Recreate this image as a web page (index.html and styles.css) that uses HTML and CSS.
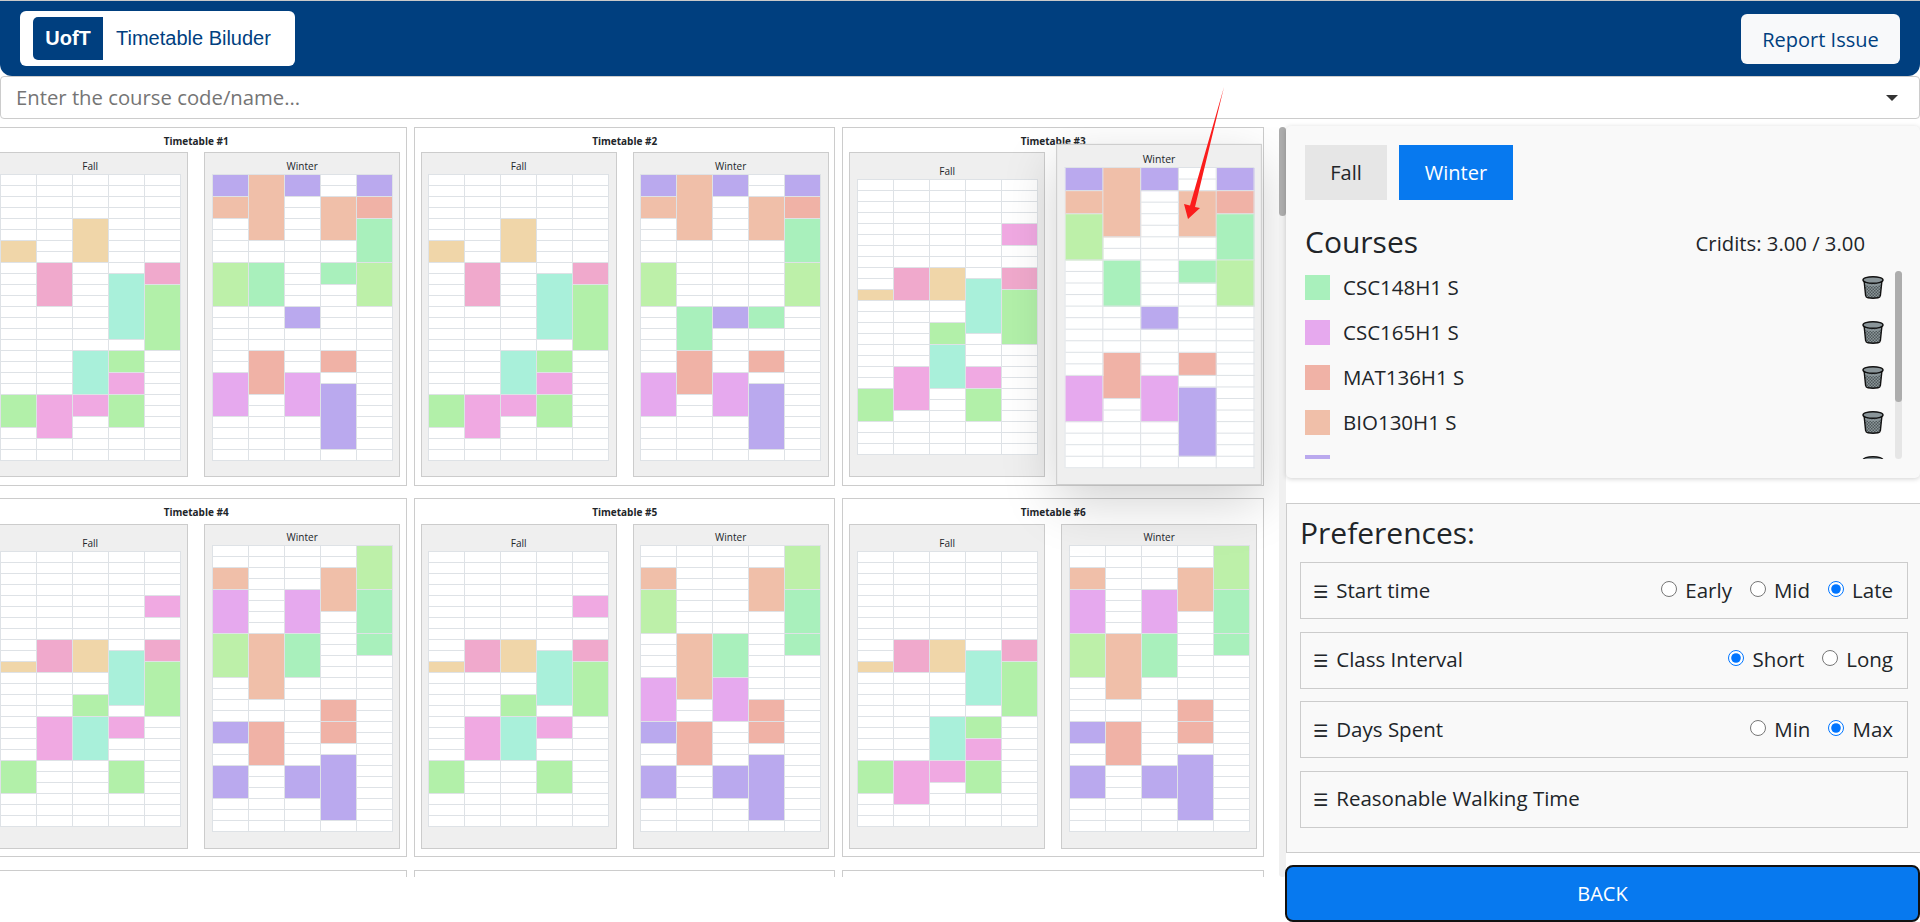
FILE: index.html
```html
<!DOCTYPE html>
<html lang="en">
<head>
    <meta charset="UTF-8">
    <meta name="viewport" content="width=device-width, initial-scale=1.0">
    <title>UofT Timetable Biluder</title>
    <link rel="stylesheet" href="styles.css">
</head>
<body>
    <header class="topbar">
        <div class="brand">
            <span class="brand-mark">UofT</span>
            <span class="brand-name">Timetable Biluder</span>
        </div>
        <button class="report-btn">Report Issue</button>
    </header>

    <div class="course-search">
        <input type="text" placeholder="Enter the course code/name...">
        <span class="caret"></span>
    </div>

    <main class="content">
        <div class="results-wrap">
            <section class="results">
                <div class="results-grid" id="results-grid"></div>
            </section>
            <div class="scrollbar">
                <div class="scrollbar-thumb results-thumb"></div>
            </div>
        </div>

        <aside class="sidebar">
            <div class="courses-panel">
                <div class="term-tabs">
                    <button class="term-tab">Fall</button>
                    <button class="term-tab active">Winter</button>
                </div>
                <div class="courses-head">
                    <h3>Courses</h3>
                    <span class="credits">Cridits: 3.00 / 3.00</span>
                </div>
                <div class="course-box">
                    <ul class="course-list" id="course-list"></ul>
                    <div class="scrollbar list-scrollbar">
                        <div class="scrollbar-thumb list-thumb"></div>
                    </div>
                </div>
            </div>

            <div class="prefs-panel">
                <h3>Preferences:</h3>
                <div class="pref-row">
                    <span class="pref-name"><span class="grip">☰</span>Start time</span>
                    <div class="pref-options">
                        <label><input type="radio" name="start">Early</label>
                        <label><input type="radio" name="start">Mid</label>
                        <label><input type="radio" name="start" checked>Late</label>
                    </div>
                </div>
                <div class="pref-row">
                    <span class="pref-name"><span class="grip">☰</span>Class Interval</span>
                    <div class="pref-options">
                        <label><input type="radio" name="interval" checked>Short</label>
                        <label><input type="radio" name="interval">Long</label>
                    </div>
                </div>
                <div class="pref-row">
                    <span class="pref-name"><span class="grip">☰</span>Days Spent</span>
                    <div class="pref-options">
                        <label><input type="radio" name="days">Min</label>
                        <label><input type="radio" name="days" checked>Max</label>
                    </div>
                </div>
                <div class="pref-row">
                    <span class="pref-name"><span class="grip">☰</span>Reasonable Walking Time</span>
                </div>
            </div>

            <button class="back-btn">BACK</button>
        </aside>
    </main>

    <!-- red arrow somebody drew on top of the screenshot -->
    <svg class="annotation" width="50" height="140" viewBox="1180 85 50 140">
        <polygon points="1224,87 1195,207 1200,208 1188,219 1184,204 1190,205.5" fill="#fb1c1c"/>
    </svg>

    <script src="app.js"></script>
</body>
</html>
```

FILE: styles.css
```css
* {
    box-sizing: border-box;
}

body {
    font-family: "Open Sans", "Noto Sans", Arial, sans-serif;
    margin: 0;
    height: 100vh;
    overflow: hidden;
    display: flex;
    flex-direction: column;
    background-color: #fff;
    color: #212529;
}

h3 {
    margin: 0;
    font-weight: 400;
}

/* top bar */
.topbar {
    height: 76px;
    flex: none;
    display: flex;
    align-items: center;
    justify-content: space-between;
    padding: 0 20px;
    background-color: #003f7f;
    border-top: 1px solid #c9c9c9;
    border-radius: 0 0 12px 12px;
}

.brand {
    width: 275px;
    height: 55px;
    display: flex;
    align-items: center;
    padding-left: 13px;
    background: #fff;
    border-radius: 6px;
    font-family: "Liberation Sans", Arial, sans-serif;
}

.brand-mark {
    width: 70px;
    height: 43px;
    line-height: 43px;
    text-align: center;
    font-size: 20px;
    font-weight: 700;
    color: #fff;
    background: #003f7f;
    border-radius: 5px 0 0 5px;
}

.brand-name {
    margin-left: 13px;
    font-size: 20px;
    color: #003f7f;
}

.report-btn {
    width: 159px;
    height: 50px;
    margin-top: 1px;
    font: inherit;
    font-size: 20px;
    color: #003f7f;
    background: #f8f9fa;
    border: none;
    border-radius: 6px;
}

/* course search */
.course-search {
    height: 43px;
    flex: none;
    display: flex;
    align-items: center;
    padding: 0 21px 0 13px;
    border: 1px solid #ccc;
    border-radius: 4px;
}

.course-search input {
    flex: 1;
    border: none;
    outline: none;
    padding: 0 2px 2px;
    background: transparent;
    font: inherit;
    font-size: 20.3px;
    color: #333;
}

.course-search input::placeholder {
    color: #757575;
}

.caret {
    width: 0;
    height: 0;
    margin-top: 1px;
    border-left: 6px solid transparent;
    border-right: 6px solid transparent;
    border-top: 6px solid #333;
}

/* main area */
.content {
    flex: 1;
    display: flex;
    min-height: 0;
}

.results-wrap {
    width: 1286px;
    height: 750px;
    flex: none;
    margin-top: 8px;
    display: flex;
}

.results {
    flex: 1;
    min-width: 0;
    overflow: hidden;
}

.scrollbar {
    width: 7px;
    flex: none;
    background: #f0f0f0;
    border-radius: 4px;
}

.scrollbar-thumb {
    background: #acacac;
    border-radius: 4px;
}

.results-thumb {
    height: 89px;
}

.results-grid {
    display: grid;
    grid-template-columns: repeat(3, 421.5px);
    grid-auto-rows: 359px;
    column-gap: 7px;
    row-gap: 12.3px;
    margin-left: -14.6px;
}

.timetable {
    border: 1px solid #ccc;
    background: #fff;
}

.timetable-title {
    height: 24.4px;
    line-height: 26px;
    text-align: center;
    font-size: 10px;
    font-weight: 700;
}

.terms {
    display: flex;
    justify-content: center;
    gap: 16px;
}

.term {
    width: 196px;
    height: 325px;
    display: flex;
    flex-direction: column;
    align-items: center;
    justify-content: center;
    padding-bottom: 9px;
    background: #efefef;
    border: 1px solid #ccc;
}

.term.enlarged {
    position: relative;
    z-index: 5;
    transform: scale(1.05);
    box-shadow: 0 16px 48px rgba(0, 0, 0, 0.175);
}

.term-label {
    height: 14px;
    line-height: 12px;
    font-size: 10px;
}

.week {
    display: grid;
    grid-template-columns: repeat(5, 36px);
    grid-auto-rows: 11px;
    border-left: 1px solid #dee2e6;
    border-top: 1px solid #dee2e6;
    background: #fff;
}

.slot {
    border-right: 1px solid #dee2e6;
    border-bottom: 1px solid #dee2e6;
}

.mint { background: #a9f0bc; }
.orchid { background: #e6a9ee; }
.salmon { background: #f0b2a6; }
.peach { background: #f0bfa9; }
.violet { background: #baa9ee; }
.lime { background: #bdf0a9; }
.tan { background: #f0d6a9; }
.pink { background: #f0a9cc; }
.teal { background: #a9f0da; }
.green { background: #b2f0a9; }
.magenta { background: #f0a9e2; }

/* sidebar */
.sidebar {
    flex: 1;
    min-width: 0;
    display: flex;
    flex-direction: column;
}

.courses-panel {
    height: 352px;
    margin-top: 7px;
    padding: 19px 18px 19px 19px;
    background: #f9f9f9;
    border-radius: 5px;
    box-shadow: 0 1px 5px rgba(0, 0, 0, 0.18);
}

.term-tabs {
    display: flex;
    gap: 12px;
}

.term-tab {
    height: 55px;
    width: 82px;
    font: inherit;
    font-size: 20px;
    color: #212529;
    background: #e6e6e6;
    border: none;
}

.term-tab.active {
    width: 114px;
    color: #fff;
    background: #0779ef;
}

.courses-head {
    height: 71px;
    padding: 15px 37px 0 0;
    display: flex;
    align-items: center;
    justify-content: space-between;
}

.courses-head h3 {
    margin-bottom: 4px;
    font-size: 30px;
}

.credits {
    font-size: 20.3px;
}

.course-box {
    height: 188px;
    display: flex;
}

.course-list {
    flex: 1;
    min-width: 0;
    margin: 0;
    padding: 4px 0 0;
    list-style: none;
    overflow: hidden;
}

.list-scrollbar {
    background: #e6e6e6;
}

.list-thumb {
    height: 131px;
    background: #adadad;
}

.course {
    height: 45px;
    display: flex;
    align-items: flex-start;
    padding-right: 11px;
    font-size: 20.5px;
}

.swatch {
    width: 25px;
    height: 25px;
    flex: none;
    margin-right: 13px;
}

.course-name {
    flex: 1;
    line-height: 24px;
}

.trash {
    flex: none;
}

.prefs-panel {
    height: 350px;
    margin-top: 25px;
    padding: 0 12px 0 13px;
    background: #f9f9f9;
    border: 1px solid #ccc;
    border-right: none;
}

.prefs-panel h3 {
    height: 58px;
    line-height: 58px;
    font-size: 30px;
}

.pref-row {
    height: 57px;
    display: flex;
    align-items: center;
    justify-content: space-between;
    margin-bottom: 12.5px;
    padding: 0 14px 2px 12px;
    border: 1px solid #ccc;
    font-size: 20.5px;
}

.grip {
    margin-right: 8px;
    font-family: "DejaVu Sans", sans-serif;
    font-size: 17px;
}

.pref-options {
    display: flex;
    gap: 18px;
}

.pref-options label {
    display: flex;
    align-items: center;
}

.pref-options input {
    width: 16px;
    height: 16px;
    margin: 0 8px 2px 0;
}

.back-btn {
    height: 57px;
    margin-top: 12px;
    margin-left: -1px;
    font: inherit;
    font-size: 20px;
    color: #fff;
    background: #0779ef;
    border: 2px solid #111;
    border-radius: 8px;
}

.annotation {
    position: absolute;
    left: 1180px;
    top: 85px;
    z-index: 10;
    pointer-events: none;
}
```

FILE: app.js
```javascript
// [day, first half hour, length, colour]
const fallA = [
    [0, 6, 2, 'tan'], [0, 20, 3, 'green'],
    [1, 8, 4, 'pink'], [1, 20, 4, 'magenta'],
    [2, 4, 4, 'tan'], [2, 16, 4, 'teal'], [2, 20, 2, 'magenta'],
    [3, 9, 6, 'teal'], [3, 16, 2, 'green'], [3, 18, 2, 'magenta'], [3, 20, 3, 'green'],
    [4, 8, 2, 'pink'], [4, 10, 6, 'green']
];
const fallB = [
    [0, 10, 1, 'tan'], [0, 19, 3, 'green'],
    [1, 8, 3, 'pink'], [1, 17, 4, 'magenta'],
    [2, 8, 3, 'tan'], [2, 13, 2, 'green'], [2, 15, 4, 'teal'],
    [3, 9, 5, 'teal'], [3, 17, 2, 'magenta'], [3, 19, 3, 'green'],
    [4, 4, 2, 'magenta'], [4, 8, 2, 'pink'], [4, 10, 5, 'green']
];
const fallC = [
    [0, 10, 1, 'tan'], [0, 19, 3, 'green'],
    [1, 8, 3, 'pink'], [1, 15, 4, 'magenta'],
    [2, 8, 3, 'tan'], [2, 13, 2, 'green'], [2, 15, 4, 'teal'],
    [3, 9, 5, 'teal'], [3, 15, 2, 'magenta'], [3, 19, 3, 'green'],
    [4, 4, 2, 'magenta'], [4, 8, 2, 'pink'], [4, 10, 5, 'green']
];
const fallD = [
    [0, 10, 1, 'tan'], [0, 19, 3, 'green'],
    [1, 8, 3, 'pink'], [1, 19, 4, 'magenta'],
    [2, 8, 3, 'tan'], [2, 15, 4, 'teal'], [2, 19, 2, 'magenta'],
    [3, 9, 5, 'teal'], [3, 15, 2, 'green'], [3, 17, 2, 'magenta'], [3, 19, 3, 'green'],
    [4, 8, 2, 'pink'], [4, 10, 5, 'green']
];

const winterA = [
    [0, 0, 2, 'violet'], [0, 2, 2, 'peach'], [0, 8, 4, 'lime'], [0, 18, 4, 'orchid'],
    [1, 0, 6, 'peach'], [1, 8, 4, 'mint'], [1, 16, 4, 'salmon'],
    [2, 0, 2, 'violet'], [2, 12, 2, 'violet'], [2, 18, 4, 'orchid'],
    [3, 2, 4, 'peach'], [3, 8, 2, 'mint'], [3, 16, 2, 'salmon'], [3, 19, 6, 'violet'],
    [4, 0, 2, 'violet'], [4, 2, 2, 'salmon'], [4, 4, 4, 'mint'], [4, 8, 4, 'lime']
];
const winterB = [
    [0, 0, 2, 'violet'], [0, 2, 2, 'peach'], [0, 8, 4, 'lime'], [0, 18, 4, 'orchid'],
    [1, 0, 6, 'peach'], [1, 12, 4, 'mint'], [1, 16, 4, 'salmon'],
    [2, 0, 2, 'violet'], [2, 12, 2, 'violet'], [2, 18, 4, 'orchid'],
    [3, 2, 4, 'peach'], [3, 12, 2, 'mint'], [3, 16, 2, 'salmon'], [3, 19, 6, 'violet'],
    [4, 0, 2, 'violet'], [4, 2, 2, 'salmon'], [4, 4, 4, 'mint'], [4, 8, 4, 'lime']
];
const winterC = [
    [0, 0, 2, 'violet'], [0, 2, 2, 'peach'], [0, 4, 4, 'lime'], [0, 18, 4, 'orchid'],
    [1, 0, 6, 'peach'], [1, 8, 4, 'mint'], [1, 16, 4, 'salmon'],
    [2, 0, 2, 'violet'], [2, 12, 2, 'violet'], [2, 18, 4, 'orchid'],
    [3, 2, 4, 'peach'], [3, 8, 2, 'mint'], [3, 16, 2, 'salmon'], [3, 19, 6, 'violet'],
    [4, 0, 2, 'violet'], [4, 2, 2, 'salmon'], [4, 4, 4, 'mint'], [4, 8, 4, 'lime']
];
const winterD = [
    [0, 2, 2, 'peach'], [0, 4, 4, 'orchid'], [0, 8, 4, 'lime'], [0, 16, 2, 'violet'], [0, 20, 3, 'violet'],
    [1, 8, 6, 'peach'], [1, 16, 4, 'salmon'],
    [2, 4, 4, 'orchid'], [2, 8, 4, 'mint'], [2, 20, 3, 'violet'],
    [3, 2, 4, 'peach'], [3, 14, 2, 'salmon'], [3, 16, 2, 'salmon'], [3, 19, 6, 'violet'],
    [4, 0, 4, 'lime'], [4, 4, 4, 'mint'], [4, 8, 2, 'mint']
];
const winterE = [
    [0, 2, 2, 'peach'], [0, 4, 4, 'lime'], [0, 12, 4, 'orchid'], [0, 16, 2, 'violet'], [0, 20, 3, 'violet'],
    [1, 8, 6, 'peach'], [1, 16, 4, 'salmon'],
    [2, 8, 4, 'mint'], [2, 12, 4, 'orchid'], [2, 20, 3, 'violet'],
    [3, 2, 4, 'peach'], [3, 14, 2, 'salmon'], [3, 16, 2, 'salmon'], [3, 19, 6, 'violet'],
    [4, 0, 4, 'lime'], [4, 4, 4, 'mint'], [4, 8, 2, 'mint']
];

const timetables = [
    { fall: fallA, fallRows: 26, winter: winterA },
    { fall: fallA, fallRows: 26, winter: winterB },
    { fall: fallB, fallRows: 25, winter: winterC, enlarged: true },
    { fall: fallC, fallRows: 25, winter: winterD },
    { fall: fallC, fallRows: 25, winter: winterE },
    { fall: fallD, fallRows: 25, winter: winterD }
];

// the fifth course is scrolled out of view, only its swatch and bin peek in
const courses = [
    { name: 'CSC148H1 S', colour: 'mint' },
    { name: 'CSC165H1 S', colour: 'orchid' },
    { name: 'MAT136H1 S', colour: 'salmon' },
    { name: 'BIO130H1 S', colour: 'peach' },
    { name: '', colour: 'violet' }
];

const trashIcon = `
    <svg class="trash" width="22" height="24" viewBox="0 0 22 24">
        <defs>
            <pattern id="mesh" width="3" height="3" patternUnits="userSpaceOnUse">
                <rect width="3" height="3" fill="#8b9699"/>
                <rect width="1.5" height="1.5" fill="#4f585b"/>
                <rect x="1.5" y="1.5" width="1.5" height="1.5" fill="#4f585b"/>
            </pattern>
        </defs>
        <path d="M2 5 L3.6 20.5 Q3.9 22.5 6 22.8 Q11 23.6 16 22.8 Q18.1 22.5 18.4 20.5 L20 5 Z" fill="url(#mesh)" stroke="#111" stroke-width="1.4"/>
        <ellipse cx="11" cy="5" rx="10" ry="3.3" fill="#8a9599" stroke="#111" stroke-width="1.4"/>
        <path d="M3.2 8 Q11 11 18.8 8 L18.6 10 Q11 12.6 3.4 10 Z" fill="#8a9599"/>
    </svg>`;

function renderWeek(blocks, rows) {
    const week = document.createElement('div');
    week.className = 'week';
    let taken = 0;
    blocks.forEach(([day, start, length, colour]) => {
        const block = document.createElement('div');
        block.className = `slot ${colour}`;
        block.style.gridColumn = day + 1;
        block.style.gridRow = `${start + 1} / span ${length}`;
        week.appendChild(block);
        taken += length;
    });
    // whatever is left flows into the free cells
    for (let i = 0; i < rows * 5 - taken; i++) {
        const slot = document.createElement('div');
        slot.className = 'slot';
        week.appendChild(slot);
    }
    return week;
}

function renderTerm(label, blocks, rows, enlarged) {
    const term = document.createElement('div');
    term.className = enlarged ? 'term enlarged' : 'term';
    const title = document.createElement('div');
    title.className = 'term-label';
    title.textContent = label;
    term.appendChild(title);
    term.appendChild(renderWeek(blocks, rows));
    return term;
}

const grid = document.getElementById('results-grid');
timetables.forEach((timetable, index) => {
    const card = document.createElement('div');
    card.className = 'timetable';
    card.innerHTML = `<div class="timetable-title">Timetable #${index + 1}</div>`;
    const terms = document.createElement('div');
    terms.className = 'terms';
    terms.appendChild(renderTerm('Fall', timetable.fall, timetable.fallRows));
    terms.appendChild(renderTerm('Winter', timetable.winter, 26, timetable.enlarged));
    card.appendChild(terms);
    grid.appendChild(card);
});

// next row of results, only the top edge is in view
for (let i = 0; i < 3; i++) {
    const card = document.createElement('div');
    card.className = 'timetable';
    grid.appendChild(card);
}

const courseList = document.getElementById('course-list');
courses.forEach(course => {
    const item = document.createElement('li');
    item.className = 'course';
    item.innerHTML = `
        <span class="swatch ${course.colour}"></span>
        <span class="course-name">${course.name}</span>
        ${trashIcon}
    `;
    courseList.appendChild(item);
});
```
